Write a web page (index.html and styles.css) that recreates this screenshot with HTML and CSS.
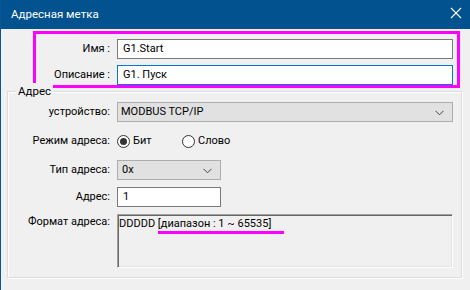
FILE: index.html
```html
<!DOCTYPE html>
<html lang="ru">
<head>
<meta charset="utf-8">
<title>Адресная метка</title>
<link rel="stylesheet" href="styles.css">
</head>
<body>
<div class="window">
  <div class="titlebar">
    <span class="title">Адресная метка</span>
    <svg class="close" width="12" height="12" viewBox="0 0 12 12"><path d="M1 1 L11 11 M11 1 L1 11" stroke="#fff" stroke-width="1.1" fill="none"/></svg>
  </div>
  <div class="body">
    <div class="highlight">
      <div class="row">
        <label class="lbl">Имя :</label>
        <div class="input wide">G1.Start</div>
      </div>
      <div class="row">
        <label class="lbl">Описание :</label>
        <div class="input wide focused">G1. Пуск</div>
      </div>
    </div>
    <div class="group">
      <span class="legend">Адрес</span>
      <div class="row r-device">
        <label class="lbl">устройство:</label>
        <div class="select wide">MODBUS TCP/IP<svg class="chev" width="9" height="6" viewBox="0 0 9 6"><path d="M0.5 0.8 L4.5 4.8 L8.5 0.8" stroke="#444" stroke-width="1" fill="none"/></svg></div>
      </div>
      <div class="row r-radio">
        <label class="lbl">Режим адреса:</label>
        <div class="radios">
          <span class="ritem first"><span class="radio checked"><span class="dot"></span></span><span class="rtext">Бит</span></span>
          <span class="ritem"><span class="radio"></span><span class="rtext">Слово</span></span>
        </div>
      </div>
      <div class="row r-type">
        <label class="lbl">Тип адреса:</label>
        <div class="select narrow">0x<svg class="chev" width="9" height="6" viewBox="0 0 9 6"><path d="M0.5 0.8 L4.5 4.8 L8.5 0.8" stroke="#444" stroke-width="1" fill="none"/></svg></div>
      </div>
      <div class="row r-addr">
        <label class="lbl">Адрес:</label>
        <div class="input narrow">1</div>
      </div>
      <div class="row r-format">
        <label class="lbl top">Формат адреса:</label>
        <div class="format">DDDDD <span class="mark">[диапазон : 1 ~ 65535]</span></div>
      </div>
    </div>
  </div>
</div>
</body>
</html>
```

FILE: styles.css
```css
* { box-sizing: border-box; }
html, body { margin: 0; padding: 0; }
body {
  width: 470px;
  height: 290px;
  overflow: hidden;
  font-family: Roboto, "Noto Sans", sans-serif;
  font-size: 11px;
  color: #000;
  background: #f0f0f0;
}
.window {
  width: 470px;
  height: 290px;
  background: #f0f0f0;
  border-left: 1px solid #0a5594;
}
.titlebar {
  height: 29px;
  background: #02528f;
  color: #fff;
  display: flex;
  align-items: center;
  justify-content: space-between;
  padding: 0 8px 1px 10px;
}
.title { font-size: 11.5px; }
.close { display: block; margin-top: -2px; }
.body { padding-top: 2px; }
.highlight {
  margin-left: 32px;
  width: 427px;
  height: 57px;
  border: 3px solid #ff00ff;
  padding: 5px 3px 0 0;
  display: flex;
  flex-direction: column;
  gap: 6px;
}
.row {
  display: flex;
  align-items: center;
  gap: 7px;
}
.highlight .lbl { width: 74px; }
.lbl {
  text-align: right;
  white-space: nowrap;
  flex: none;
  line-height: 16px;
}
.lbl.top { align-self: flex-start; margin-top: 0; }
.input {
  height: 20px;
  border: 1px solid #7a7a7a;
  background: #fff;
  padding: 0 5px;
  line-height: 18px;
  white-space: nowrap;
}
.input.focused { border-color: #0078d7; }
.wide { width: 336px; }
.narrow { width: 104px; }
.group {
  position: relative;
  margin: 3px 0 0 6px;
  width: 455px;
  height: 187px;
  border: 1px solid #dcdcdc;
  box-shadow: inset 1px 1px 0 #fff, 1px 1px 0 #fff;
  padding: 10px 7px 0 0;
  display: flex;
  flex-direction: column;
  gap: 7px;
}
.group .lbl { width: 102px; }
.legend {
  position: absolute;
  top: -9px;
  left: 8px;
  padding: 0 2px;
  background: #f0f0f0;
  line-height: 16px;
  font-size: 11.5px;
}
.select {
  height: 20px;
  border: 1px solid #adadad;
  background: #e1e1e1;
  padding: 0 8px 0 3px;
  line-height: 18px;
  display: flex;
  align-items: center;
  justify-content: space-between;
  white-space: nowrap;
}
.select.narrow { padding-left: 4px; }
.chev { display: block; margin-top: 1px; }
.r-radio { height: 24px; }
.radios {
  display: flex;
  align-items: center;
}
.ritem { display: flex; align-items: center; }
.ritem.first { width: 65px; }
.radio {
  width: 13px;
  height: 13px;
  border: 1px solid #333;
  border-radius: 50%;
  background: #fff;
  display: flex;
  align-items: center;
  justify-content: center;
  flex: none;
}
.radio .dot {
  width: 7px;
  height: 7px;
  border-radius: 50%;
  background: #333;
}
.rtext { margin-left: 3px; line-height: 16px; }
.format {
  width: 336px;
  height: 54px;
  border: 1px solid;
  border-color: #a0a0a0 #fff #fff #a0a0a0;
  box-shadow: inset 1px 1px 0 #696969, inset -1px -1px 0 #e3e3e3;
  padding: 1px 2px 0 1px;
  line-height: 16px;
  white-space: nowrap;
}
.mark {
  display: inline-block;
  border-bottom: 3px solid #ff00ff;
  padding-right: 13px;
  line-height: 15px;
}
```
